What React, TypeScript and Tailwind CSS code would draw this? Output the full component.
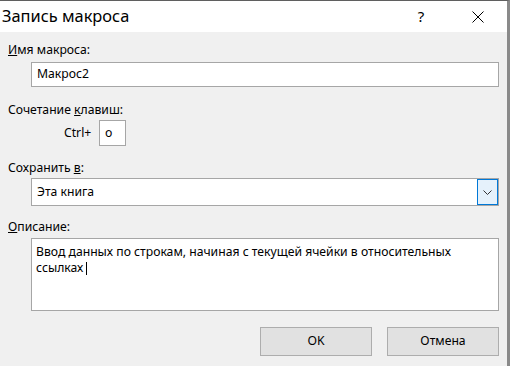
export default function App() {
  const font = { fontFamily: '"Noto Sans", "Liberation Sans", sans-serif' };

  return (
    <div
      style={font}
      className="flex h-[366px] w-[510px] flex-col border-t border-t-[#5f5f5f] border-r-[3px] border-r-[#8a8a8a] text-[12.2px] text-black"
    >
      {/* title bar */}
      <div className="flex h-[31px] shrink-0 items-center bg-white pl-[2px]">
        <div className="text-[16.4px] leading-none">Запись макроса</div>
        <div className="ml-auto flex w-[20px] justify-center text-[15px] leading-none">?</div>
        <div className="ml-[37px] mr-[19px] flex w-[20px] justify-center">
          <svg width="12" height="12" viewBox="0 0 12 12">
            <path d="M0.5 0.5 L11.5 11.5 M11.5 0.5 L0.5 11.5" stroke="#000" strokeWidth="1" fill="none" />
          </svg>
        </div>
      </div>

      {/* body */}
      <div className="flex flex-1 flex-col bg-[#f0f0f0] pl-[8px] pr-[8px] pt-[10px]">
        <div className="leading-4">
          <u>И</u>мя макроса:
        </div>
        <div className="ml-[23px] mt-1 flex h-[25px] items-center border border-[#a6a6a6] bg-white pl-[5px]">
          Макрос2
        </div>

        <div className="mt-[15px] leading-4">
          Сочетание <u>к</u>лавиш:
        </div>
        <div className="mt-[2px] flex items-center">
          <span className="ml-[56px] w-[35px]">Ctrl+</span>
          <div className="flex h-[26px] w-[27px] items-center border border-[#a6a6a6] bg-white pl-[5px]">
            o
          </div>
        </div>

        <div className="mt-[14px] leading-4">
          Сохранить <u>в</u>:
        </div>
        <div className="ml-[23px] mt-[2px] flex h-[28px] items-stretch border border-[#a6a6a6] bg-white">
          <div className="flex flex-1 items-center pl-[5px]">Эта книга</div>
          <div className="flex w-[21px] items-center justify-center border border-[#0078d7] bg-[#e5f1fb]">
            <svg width="9" height="5" viewBox="0 0 9 5">
              <path d="M0.5 0.5 L4.5 4.5 L8.5 0.5" stroke="#333" strokeWidth="1" fill="none" />
            </svg>
          </div>
        </div>

        <div className="mt-[13px] leading-4">
          <u>О</u>писание:
        </div>
        <div className="ml-[23px] mt-[3px] h-[73px] border border-[#a6a6a6] bg-white px-[4px] pt-[5px] leading-[15.5px]">
          Ввод данных по строкам, начиная с текущей ячейки в относительных ссылках{" "}
          <span className="inline-block h-[13px] w-px bg-black align-middle" />
        </div>

        <div className="mt-[16px] flex justify-end gap-[15px]">
          <button className="h-[29px] w-[112px] border border-[#adadad] bg-[#e1e1e1]">OK</button>
          <button className="h-[29px] w-[112px] border border-[#adadad] bg-[#e1e1e1]">Отмена</button>
        </div>
      </div>
    </div>
  );
}
